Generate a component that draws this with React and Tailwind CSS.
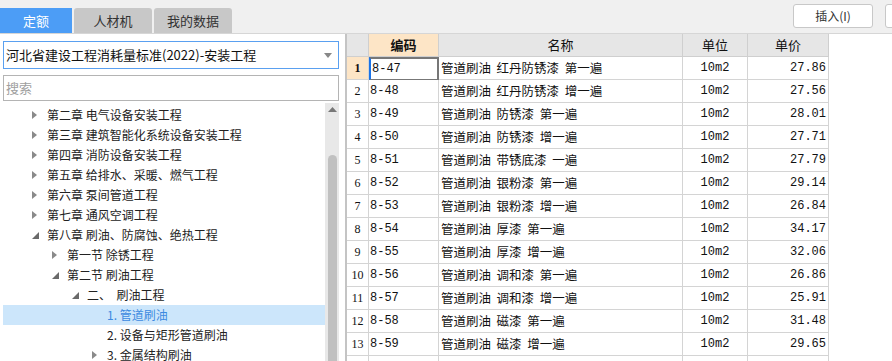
import React from 'react';

const cjk = { fontFamily: '"Noto Sans CJK SC", "Noto Sans", sans-serif' };
const mono = { fontFamily: '"Liberation Mono", "Noto Sans CJK SC", monospace' };

// tree rows: level, state ('c' collapsed, 'e' expanded, null leaf), label
const treeRows = [
  [0, 'c', '第二章 电气设备安装工程'],
  [0, 'c', '第三章 建筑智能化系统设备安装工程'],
  [0, 'c', '第四章 消防设备安装工程'],
  [0, 'c', '第五章 给排水、采暖、燃气工程'],
  [0, 'c', '第六章 泵间管道工程'],
  [0, 'c', '第七章 通风空调工程'],
  [0, 'e', '第八章 刷油、防腐蚀、绝热工程'],
  [1, 'c', '第一节 除锈工程'],
  [1, 'e', '第二节 刷油工程'],
  [2, 'e', '二、  刷油工程'],
  [3, null, '1. 管道刷油', true],
  [3, null, '2. 设备与矩形管道刷油'],
  [3, 'c', '3. 金属结构刷油'],
];

const rows = [
  ['8-47', '管道刷油 红丹防锈漆 第一遍', '27.86'],
  ['8-48', '管道刷油 红丹防锈漆 增一遍', '27.56'],
  ['8-49', '管道刷油 防锈漆 第一遍', '28.01'],
  ['8-50', '管道刷油 防锈漆 增一遍', '27.71'],
  ['8-51', '管道刷油 带锈底漆 一遍', '27.79'],
  ['8-52', '管道刷油 银粉漆 第一遍', '29.14'],
  ['8-53', '管道刷油 银粉漆 增一遍', '26.84'],
  ['8-54', '管道刷油 厚漆 第一遍', '34.17'],
  ['8-55', '管道刷油 厚漆 增一遍', '32.06'],
  ['8-56', '管道刷油 调和漆 第一遍', '26.86'],
  ['8-57', '管道刷油 调和漆 增一遍', '25.91'],
  ['8-58', '管道刷油 磁漆 第一遍', '31.48'],
  ['8-59', '管道刷油 磁漆 增一遍', '29.65'],
];

function Arrow({ state }) {
  if (state === 'c') {
    return (
      <svg width="6" height="8" viewBox="0 0 6 8">
        <path d="M0 0 L5 4 L0 8 Z" fill="#8a8a8a" />
      </svg>
    );
  }
  if (state === 'e') {
    return (
      <svg width="7" height="7" viewBox="0 0 7 7">
        <path d="M7 0 L7 7 L0 7 Z" fill="#6a6a6a" />
      </svg>
    );
  }
  return null;
}

function TreeRow({ level, state, label, selected }) {
  const pad = ['pl-[29px]', 'pl-[49px]', 'pl-[69px]', 'pl-[89px]'][level];
  return (
    <div
      className={`h-5 flex items-center ${pad} text-[12px] ${selected ? 'bg-[#cce6fb] text-[#3d8ae0]' : 'text-[#222]'}`}
      style={cjk}
    >
      <span className="w-[15px] flex items-center">
        <Arrow state={state} />
      </span>
      <span className="whitespace-pre">{label}</span>
    </div>
  );
}

export default function App() {
  return (
    <div className="h-[361px] w-[892px] overflow-hidden flex flex-col bg-white" style={cjk}>
      {/* top bar with tabs */}
      <div className="h-[34px] shrink-0 bg-[#f0f0f0] border-b border-[#d6d6d6] flex items-end relative">
        <div className="w-[72px] h-[25px] bg-[#4c9df6] text-white text-[13px] flex items-center justify-center">定额</div>
        <div className="ml-[2px] w-[78px] h-[25px] bg-[#c8c8c8] rounded-t-[3px] text-[#333] text-[13px] flex items-center justify-center">人材机</div>
        <div className="ml-[2px] w-[78px] h-[25px] bg-[#c8c8c8] rounded-t-[3px] text-[#333] text-[13px] flex items-center justify-center">我的数据</div>
        <div className="ml-auto self-start mt-[4px] flex gap-[12px] -mr-[10px]">
          <div className="w-[80px] h-[24px] bg-white border border-[#c8c8c8] rounded-[3px] text-[12px] text-[#333] flex items-center justify-center">插入(I)</div>
          <div className="w-[17px] h-[24px] bg-white border border-[#c8c8c8] rounded-[3px]" />
        </div>
      </div>

      <div className="flex flex-1 min-h-0">
        {/* left panel */}
        <div className="w-[345px] shrink-0 flex flex-col pt-[7px] pl-[3px] pr-[6px]">
          <div className="h-[28px] border border-[#5aa0f0] flex items-center pl-[2px] pr-[6px] text-[13px] text-[#111]">
            <span className="flex-1">河北省建设工程消耗量标准(2022)-安装工程</span>
            <svg width="8" height="5" viewBox="0 0 8 5">
              <path d="M0 0 L8 0 L4 5 Z" fill="#888" />
            </svg>
          </div>
          <div className="mt-[6px] h-[26px] border border-[#b4b4b4] flex items-center pl-[2px] text-[13px] text-[#a0a0a0]">搜索</div>
          <div className="flex flex-1 min-h-0 mt-[2px]">
            <div className="flex-1 pt-[2px]">
              {treeRows.map(([lv, st, label, sel], i) => (
                <TreeRow key={i} level={lv} state={st} label={label} selected={sel} />
              ))}
            </div>
            <div className="w-[14px] bg-[#e8e8e8] flex flex-col items-center">
              <svg className="mt-[4px]" width="9" height="5" viewBox="0 0 9 5">
                <path d="M0 5 L4.5 0 L9 5 Z" fill="#777" />
              </svg>
              <div className="mt-[43px] w-[9px] flex-1 bg-[#c0c0c0] rounded-t-full" />
            </div>
          </div>
        </div>

        {/* divider */}
        <div className="w-[2px] shrink-0 bg-[#c4c4c4]" />

        {/* table */}
        <div className="flex-1 bg-white">
          <div className="flex h-[23px] text-[13px] text-[#111]">
            <div className="w-[22px] bg-[#e6e6e6] border-r border-b border-[#cfcfcf]" />
            <div className="w-[70px] bg-[#fde5c6] border-r border-b border-[#cfcfcf] flex items-center justify-center font-bold">编码</div>
            <div className="w-[244px] bg-[#e6e6e6] border-r border-b border-[#cfcfcf] flex items-center justify-center">名称</div>
            <div className="w-[65px] bg-[#e6e6e6] border-r border-b border-[#cfcfcf] flex items-center justify-center">单位</div>
            <div className="w-[81px] bg-[#e6e6e6] border-r border-b border-[#cfcfcf] flex items-center justify-center">单价</div>
          </div>
          {rows.map(([code, name, price], i) => {
            const sel = i === 0;
            return (
              <div key={code} className="flex h-[23px] text-[#111]">
                <div
                  className={`w-[22px] border-r border-b border-[#d4d4d4] flex items-center justify-center text-[12px] ${sel ? 'bg-[#fde5c6] font-bold' : ''}`}
                  style={{ fontFamily: '"Liberation Serif", serif' }}
                >
                  {i + 1}
                </div>
                <div
                  className={`w-[70px] border-b flex items-center pl-[1px] text-[12px] ${sel ? 'border-2 border-[#777] border-l-[#1a73e8]' : 'border-r border-[#d4d4d4]'}`}
                  style={mono}
                >
                  {code}
                </div>
                <div className="w-[244px] border-r border-b border-[#d4d4d4] flex items-center pl-[2px] text-[12.5px] whitespace-pre" style={cjk}>
                  {name.replace(/ /g, '  ')}
                </div>
                <div className="w-[65px] border-r border-b border-[#d4d4d4] flex items-center justify-center text-[12px]" style={mono}>10m2</div>
                <div className="w-[81px] border-r border-b border-[#d4d4d4] flex items-center justify-end pr-[2px] text-[12px]" style={mono}>{price}</div>
              </div>
            );
          })}
          <div className="flex h-[23px]">
            <div className="w-[22px] border-r border-[#d4d4d4]" />
            <div className="w-[70px] border-r border-[#d4d4d4]" />
            <div className="w-[244px] border-r border-[#d4d4d4]" />
            <div className="w-[65px] border-r border-[#d4d4d4]" />
            <div className="w-[81px] border-r border-[#d4d4d4]" />
          </div>
        </div>
      </div>
    </div>
  );
}
